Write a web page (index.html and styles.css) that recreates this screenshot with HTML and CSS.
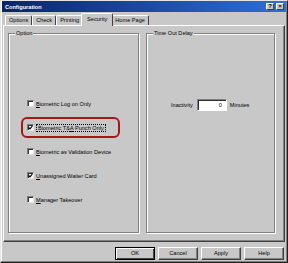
FILE: index.html
```html
<!DOCTYPE html>
<html lang="en">
<head>
    <meta charset="UTF-8" />
    <title>Configuration</title>
    <link rel="stylesheet" href="styles.css">
</head>
<body>

<div class="window">
    <div class="titlebar">
        <span class="title">Configuration</span>
        <span class="tb-btns">
            <span class="tb-btn">?</span>
            <span class="tb-btn">&#215;</span>
        </span>
    </div>

    <div class="tabs">
        <span class="tab">Options</span>
        <span class="tab">Check</span>
        <span class="tab">Printing</span>
        <span class="tab active">Security</span>
        <span class="tab">Home Page</span>
    </div>

    <div class="panel">
        <div class="group option-group">
            <span class="legend">Option</span>
            <div class="checks">
                <label class="check">
                    <span class="box"></span>
                    <span><u>B</u>iometric Log on Only</span>
                </label>
                <label class="check marked">
                    <span class="box checked">
                        <svg viewBox="0 0 5 5" width="5" height="5"><path d="M0.7 2.4 L2 3.8 L4.3 1.1" fill="none" stroke="#000" stroke-width="1.1"/></svg>
                    </span>
                    <span class="focus">Biometric T&amp;<u>A</u> Punch Only</span>
                </label>
                <label class="check">
                    <span class="box"></span>
                    <span><u>B</u>iometric as Validation Device</span>
                </label>
                <label class="check">
                    <span class="box checked">
                        <svg viewBox="0 0 5 5" width="5" height="5"><path d="M0.7 2.4 L2 3.8 L4.3 1.1" fill="none" stroke="#000" stroke-width="1.1"/></svg>
                    </span>
                    <span><u>U</u>nassigned Waiter Card</span>
                </label>
                <label class="check">
                    <span class="box"></span>
                    <span><u>M</u>anager Takeover</span>
                </label>
            </div>
        </div>

        <div class="group delay-group">
            <span class="legend">Time Out Delay</span>
            <div class="delay-row">
                <span>Inactivity</span>
                <span class="field">0</span>
                <span>Minutes</span>
            </div>
        </div>
    </div>

    <div class="buttons">
        <span class="btn default">OK</span>
        <span class="btn">Cancel</span>
        <span class="btn">Apply</span>
        <span class="btn">Help</span>
    </div>
</div>

</body>
</html>
```

FILE: styles.css
```css
* {
    box-sizing: border-box;
}
body {
    margin: 0;
    font-family: "Liberation Sans", Arial, sans-serif;
    font-size: 5.6px;
    color: #000;
    background: #c8c8c8;
}
.window {
    width: 288px;
    height: 263px;
    background: #c8c8c8;
    border: 1px solid;
    border-color: #e4e4e4 #202020 #202020 #e4e4e4;
    box-shadow: inset -1px -1px 0 #808080, inset 1px 1px 0 #fff;
    padding: 0 1px 1px 1px;
    display: flex;
    flex-direction: column;
}
.titlebar {
    height: 11px;
    background: linear-gradient(90deg, #0a246a, #2e6fd6);
    color: #fff;
    font-weight: bold;
    display: flex;
    align-items: center;
    justify-content: space-between;
    padding: 0 2px 0 3px;
}
.tb-btns {
    display: flex;
    gap: 2px;
}
.tb-btn {
    width: 8px;
    height: 7px;
    background: #c8c8c8;
    border: 1px solid;
    border-color: #fff #404040 #404040 #fff;
    font-size: 6px;
    line-height: 5px;
    text-align: center;
    color: #000;
}
.tabs {
    display: flex;
    align-items: flex-end;
    height: 13px;
    padding-left: 3px;
    position: relative;
    z-index: 1;
}
.tab {
    height: 10px;
    padding: 0 3px;
    border: 1px solid;
    border-bottom: none;
    border-color: #fff #404040 transparent #fff;
    border-radius: 2px 2px 0 0;
    line-height: 8px;
    white-space: nowrap;
}
.tab.active {
    position: relative;
    height: 13px;
    margin: 0 -2px -1px;
    padding: 0 5px;
    background: #c8c8c8;
    line-height: 10px;
}
.panel {
    height: 217px;
    margin: 0 1px;
    border: 1px solid;
    border-color: #fff #404040 #404040 #fff;
    box-shadow: inset -1px -1px 0 #808080;
    display: flex;
    gap: 7px;
    padding: 7px 9px 8px 4px;
}
.group {
    height: 200px;
    border: 1px solid #808080;
    box-shadow: inset 1px 1px 0 #fff, 1px 1px 0 #fff;
}
.option-group {
    width: 131px;
    padding-left: 18px;
}
.delay-group {
    width: 129px;
    padding-left: 24px;
}
.legend {
    display: block;
    width: fit-content;
    height: 7px;
    line-height: 7px;
    margin: -4px 0 0 -12px;
    padding: 0 1px;
    background: #c8c8c8;
}
.delay-group .legend {
    margin-left: -18px;
}
.checks {
    display: flex;
    flex-direction: column;
    align-items: flex-start;
    gap: 17px;
    margin-top: 63px;
}
.check {
    display: flex;
    align-items: center;
    gap: 2px;
    height: 7px;
    white-space: nowrap;
}
.box {
    width: 7px;
    height: 7px;
    background: #fff;
    border: 1px solid;
    border-color: #808080 #e8e8e8 #e8e8e8 #808080;
    box-shadow: inset 1px 1px 0 #303030;
    display: flex;
    align-items: center;
    justify-content: center;
}
.box svg {
    display: block;
}
.marked {
    height: 21px;
    border: 2px solid #a51818;
    border-radius: 6px;
    padding: 0 12px 0 4px;
    margin: -7px 0 -7px -6px;
}
.focus {
    border: 1px dotted #000;
    padding: 0 1px;
    line-height: 6px;
}
.delay-row {
    display: flex;
    align-items: center;
    gap: 3px;
    margin-top: 62px;
}
.field {
    width: 30px;
    height: 12px;
    margin-left: 1px;
    background: #fff;
    border: 1px solid;
    border-color: #808080 #fff #fff #808080;
    box-shadow: inset 1px 1px 0 #303030;
    text-align: right;
    padding-right: 4px;
    line-height: 10px;
}
.buttons {
    display: flex;
    justify-content: flex-end;
    gap: 3px;
    margin-top: 5px;
    padding-right: 2px;
}
.btn {
    width: 40px;
    height: 13px;
    border: 1px solid;
    border-color: #fff #404040 #404040 #fff;
    box-shadow: inset -1px -1px 0 #808080;
    text-align: center;
    line-height: 11px;
}
.btn.default {
    border-color: #000;
    box-shadow: inset 1px 1px 0 #fff, inset -1px -1px 0 #404040;
}
```
